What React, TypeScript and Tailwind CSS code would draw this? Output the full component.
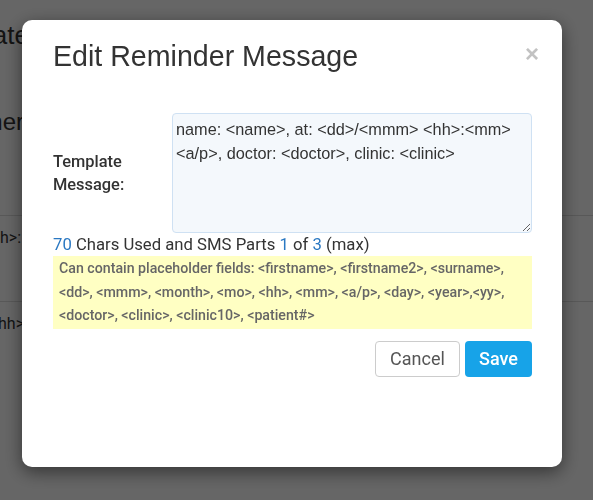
export default function App() {
  return (
    <div className="relative h-[500px] w-[593px] overflow-hidden bg-white font-['Roboto',sans-serif] text-[#333]">
      {/* Page behind the dialog */}
      <div className="flex flex-col">
        <div className="h-[215px]">
          <div className="flex h-[70px] w-[29px] items-center justify-end overflow-hidden font-['Liberation_Sans',sans-serif] text-[26px] whitespace-nowrap">
            Template
          </div>
          <div className="mt-[20px] flex h-[64px] w-[24px] items-center justify-end overflow-hidden font-['Liberation_Sans',sans-serif] text-[24px] whitespace-nowrap">
            Other
          </div>
        </div>
        <div className="border-t border-[#ddd]" />
        <div className="flex h-[44px] w-[21px] items-center justify-end overflow-hidden text-[16px] whitespace-nowrap">
          &lt;hh&gt;:
        </div>
        <div className="mt-[41px] border-t border-[#ddd]" />
        <div className="flex h-[44px] w-[24px] items-center justify-end overflow-hidden text-[16px] whitespace-nowrap">
          &lt;hh&gt;
        </div>
      </div>

      {/* Overlay */}
      <div className="fixed inset-0 bg-black/60">
        <div className="mt-[20px] ml-[22px] h-[447px] w-[540px] rounded-[10px] bg-white shadow-[0_5px_18px_rgba(0,0,0,0.5)]">
          {/* Header */}
          <div className="flex items-start justify-between pt-[20px] pr-[23px] pl-[31px]">
            <h4 className="font-['Liberation_Sans',sans-serif] text-[28.6px] leading-[32px] text-[#333]">
              Edit Reminder Message
            </h4>
            <button className="mt-[2px] font-['Liberation_Sans',sans-serif] text-[24px] leading-none font-bold text-[#c2c2c2]">
              ×
            </button>
          </div>

          {/* Body */}
          <div className="pt-[41px] pr-[30px] pl-[31px]">
            <div className="flex items-center">
              <label className="w-[119px] text-[16.4px] leading-[23px] font-medium text-[#333]">
                Template
                <br />
                Message:
              </label>
              <textarea
                className="h-[120px] flex-1 resize-y rounded-[4px] border border-[#cfe1f3] bg-[#f4f8fc] px-[3px] pt-[3px] font-['Liberation_Sans',sans-serif] text-[16.3px] leading-[24px] text-[#333] outline-none"
                defaultValue="name: <name>, at: <dd>/<mmm> <hh>:<mm> <a/p>, doctor: <doctor>, clinic: <clinic>"
              />
            </div>

            <div className="mt-[1px] text-[16.7px] leading-[22px] text-[#333]">
              <span className="text-[#2a78c2]">70</span> Chars Used and SMS Parts{" "}
              <span className="text-[#2a78c2]">1</span> of <span className="text-[#2a78c2]">3</span> (max)
            </div>

            <div className="bg-[#ffffc3] px-[6px] py-[1px] text-[14.2px] leading-[23.5px] font-medium text-[#666]">
              Can contain placeholder fields: &lt;firstname&gt;, &lt;firstname2&gt;, &lt;surname&gt;,
              &lt;dd&gt;, &lt;mmm&gt;, &lt;month&gt;, &lt;mo&gt;, &lt;hh&gt;, &lt;mm&gt;, &lt;a/p&gt;, &lt;day&gt;,
              &lt;year&gt;,&lt;yy&gt;, &lt;doctor&gt;, &lt;clinic&gt;, &lt;clinic10&gt;, &lt;patient#&gt;
            </div>

            <div className="mt-[12px] flex justify-end gap-[5px]">
              <button className="h-[36px] w-[85px] rounded-[4px] border border-[#ccc] bg-white text-[18px] text-[#555]">
                Cancel
              </button>
              <button className="h-[36px] w-[67px] rounded-[4px] bg-[#17a3e8] text-[18px] font-medium text-white">
                Save
              </button>
            </div>
          </div>
        </div>
      </div>
    </div>
  );
}
